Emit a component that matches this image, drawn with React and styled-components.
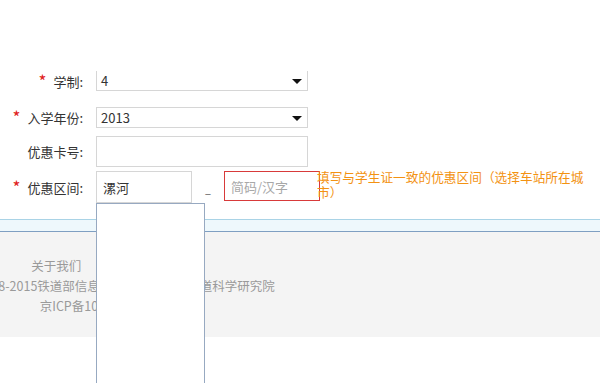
import React from "react";
import styled, { createGlobalStyle } from "styled-components";

const GlobalStyle = createGlobalStyle`
  html, body {
    margin: 0;
    padding: 0;
    background: #ffffff;
    font-family: "Noto Sans CJK SC", "Noto Sans", sans-serif;
    font-size: 12px;
    color: #333333;
  }
`;

const Page = styled.div`
  position: relative;
  width: 600px;
  height: 383px;
  overflow: hidden;
  background: #ffffff;
`;

const Form = styled.div`
  display: flex;
  flex-direction: column;
  padding-top: 71px;
  height: 148px;
`;

const Row = styled.div`
  display: flex;
  align-items: ${({ top }) => (top ? "flex-start" : "center")};
  height: ${({ h }) => h}px;
  margin-bottom: ${({ gap }) => gap || 0}px;
`;

const Label = styled.div`
  width: 83px;
  flex: none;
  display: flex;
  justify-content: flex-end;
  align-items: center;
  padding-right: 13px;
  font-size: 13px;
  color: #333333;
  white-space: nowrap;
  align-self: ${({ top }) => (top ? "center" : "auto")};
`;

const Star = styled.span`
  color: #e02020;
  font-size: 17px;
  line-height: 13px;
  margin-right: 7px;
  position: relative;
  top: -1px;
`;

const SelectBox = styled.div`
  width: 212px;
  height: ${({ h }) => h}px;
  box-sizing: border-box;
  border: 1px solid #d6d6d6;
  border-top: ${({ clipped }) => (clipped ? "none" : "1px solid #d6d6d6")};
  display: flex;
  align-items: center;
  justify-content: space-between;
  padding: 0 5px 0 4px;
  font-size: 13px;
  color: #333333;
  background: #ffffff;
`;

const Caret = styled.span`
  width: 0;
  height: 0;
  border-left: 5px solid transparent;
  border-right: 5px solid transparent;
  border-top: 5px solid #111111;
  margin-top: 1px;
`;

const TextBox = styled.div`
  width: ${({ w }) => w}px;
  height: ${({ h }) => h}px;
  box-sizing: border-box;
  border: 1px solid ${({ error }) => (error ? "#d83a3a" : "#d6d6d6")};
  display: flex;
  align-items: center;
  padding-left: 6px;
  font-size: 13px;
  color: ${({ placeholder }) => (placeholder ? "#a8a8a8" : "#333333")};
  background: #ffffff;
  flex: none;
`;

const Dash = styled.span`
  width: 32px;
  flex: none;
  align-self: flex-end;
  text-align: center;
  color: #666666;
  font-size: 12px;
  line-height: 12px;
  margin-bottom: 4px;
`;

const Hint = styled.div`
  margin-left: -3px;
  margin-top: -2px;
  flex: 1;
  color: #f39212;
  font-size: 12.7px;
  line-height: 15px;
`;

const FooterTop = styled.div`
  height: 11px;
  border-top: 1px solid #a9d3e6;
  border-bottom: 1px solid #7f9fc2;
  background: #eef8fc;
`;

const Footer = styled.div`
  height: 105px;
  background: #f4f4f4;
  display: flex;
  justify-content: flex-start;
`;

const FooterInner = styled.div`
  width: 192px;
  display: flex;
  flex-direction: column;
  align-items: center;
  padding-top: 24px;
  color: #9a9a9a;
  font-size: 12.5px;
  line-height: 20px;
  white-space: nowrap;
`;

const Sep = styled.span`
  margin: 0 8px 0 18px;
`;

const Suggest = styled.div`
  position: absolute;
  left: 96px;
  top: 203px;
  width: 109px;
  height: 200px;
  box-sizing: border-box;
  border: 1px solid #97a9c1;
  background: #ffffff;
`;

export default function App() {
  return (
    <>
      <GlobalStyle />
      <Page>
        <Form>
          <Row h={20} gap={16}>
            <Label>
              <Star>*</Star>学制:
            </Label>
            <SelectBox h={20} clipped>
              <span>4</span>
              <Caret />
            </SelectBox>
          </Row>
          <Row h={21} gap={8}>
            <Label>
              <Star>*</Star>入学年份:
            </Label>
            <SelectBox h={21}>
              <span>2013</span>
              <Caret />
            </SelectBox>
          </Row>
          <Row h={31} gap={4}>
            <Label>优惠卡号:</Label>
            <TextBox w={212} h={31} />
          </Row>
          <Row h={32} top>
            <Label top>
              <Star>*</Star>优惠区间:
            </Label>
            <TextBox w={96} h={32}>漯河</TextBox>
            <Dash>–</Dash>
            <TextBox w={96} h={30} error placeholder>
              简码/汉字
            </TextBox>
            <Hint>填写与学生证一致的优惠区间（选择车站所在城市）</Hint>
          </Row>
        </Form>
        <FooterTop />
        <Footer>
          <FooterInner>
            <span>
              关于我们<Sep>|</Sep>网站声明
            </span>
            <span>版权所有©2008-2015铁道部信息技术中心　中国铁道科学研究院</span>
            <span>京ICP备10009636号</span>
          </FooterInner>
        </Footer>
        <Suggest />
      </Page>
    </>
  );
}
